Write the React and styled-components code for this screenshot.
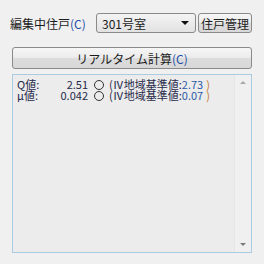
import React from 'react';
import styled, { createGlobalStyle } from 'styled-components';

const GlobalStyle = createGlobalStyle`
  html, body {
    margin: 0;
    padding: 0;
    background: #f0f0f0;
  }
  body {
    font-family: "Noto Sans CJK JP", "Noto Sans", sans-serif;
    color: #1b1b1b;
  }
`;

const Panel = styled.div`
  width: 264px;
  height: 264px;
  box-sizing: border-box;
  padding: 13px 12px 11px 12px;
  display: flex;
  flex-direction: column;
  background: #f0f0f0;
`;

const TopRow = styled.div`
  display: flex;
  align-items: center;
  height: 20px;
`;

const Label = styled.span`
  font-size: 12px;
  margin-left: -2px;
  width: 86px;
  white-space: nowrap;
`;

const Mnemonic = styled.span`
  color: #1c4fa8;
`;

const Select = styled.div`
  width: 100px;
  height: 20px;
  box-sizing: border-box;
  border: 1px solid #8a8a8a;
  border-radius: 3px;
  background: linear-gradient(#f4f4f4, #e2e2e2);
  display: flex;
  align-items: center;
  justify-content: space-between;
  padding: 0 6px 0 5px;
  font-size: 12px;
`;

const Arrow = styled.span`
  width: 0;
  height: 0;
  border-left: 4px solid transparent;
  border-right: 4px solid transparent;
  border-top: 4px solid #111;
`;

const Button = styled.div`
  box-sizing: border-box;
  border: 1px solid #8a8a8a;
  border-radius: 3px;
  background: linear-gradient(#f6f6f6 0%, #ebebeb 50%, #dcdcdc 51%, #d8d8d8 100%);
  display: flex;
  align-items: center;
  justify-content: center;
  font-size: 12px;
  height: ${p => p.$h}px;
  width: ${p => (p.$w ? `${p.$w}px` : 'auto')};
  margin-left: ${p => p.$ml || 0}px;
  margin-top: ${p => p.$mt || 0}px;
`;

const Output = styled.div`
  margin-top: 5px;
  flex: 1;
  box-sizing: border-box;
  border: 1px solid #aacbe0;
  background: #ececec;
  display: flex;
`;

const Lines = styled.div`
  flex: 1;
  padding: 4px 0 0 4px;
  font-size: 11px;
  line-height: 11px;
  color: #262a4a;
`;

const Line = styled.div`
  display: flex;
  align-items: center;
  height: 11px;
  white-space: nowrap;
`;

const Key = styled.span`
  width: 34px;
`;

const Value = styled.span`
  width: 37px;
  text-align: right;
`;

const Mark = styled.span`
  width: 8px;
  height: 8px;
  border: 1px solid #333;
  border-radius: 50%;
  margin: 0 5px 0 6px;
`;

const Num = styled.span`
  color: #2b5aa8;
`;

const Paren = styled.span`
  color: #c07a30;
  margin-left: 3px;
`;

const Scrollbar = styled.div`
  width: 16px;
  background: #f0f0f0;
  border-left: 1px solid #e6e6e6;
  display: flex;
  flex-direction: column;
  justify-content: space-between;
  align-items: center;
  padding: 6px 0;
`;

const ScrollArrow = styled.span`
  width: 0;
  height: 0;
  border-left: 3px solid transparent;
  border-right: 3px solid transparent;
  ${p => (p.$up ? 'border-bottom: 3px solid #a8a8a8;' : 'border-top: 3px solid #7a7a7a;')}
`;

const rows = [
  { key: 'Q値:', value: '2.51', base: '2.73' },
  { key: 'μ値:', value: '0.042', base: '0.07' },
];

export default function App() {
  return (
    <>
      <GlobalStyle />
      <Panel>
        <TopRow>
          <Label>
            編集中住戸<Mnemonic>(C)</Mnemonic>
          </Label>
          <Select>
            <span>301号室</span>
            <Arrow />
          </Select>
          <Button $h={20} $w={54} $ml={2}>住戸管理</Button>
        </TopRow>
        <Button $h={22} $mt={14}>
          リアルタイム計算<Mnemonic>(C)</Mnemonic>
        </Button>
        <Output>
          <Lines>
            {rows.map(r => (
              <Line key={r.key}>
                <Key>{r.key}</Key>
                <Value>{r.value}</Value>
                <Mark />
                <span>(Ⅳ地域基準値:<Num>{r.base}</Num><Paren>)</Paren></span>
              </Line>
            ))}
          </Lines>
          <Scrollbar>
            <ScrollArrow $up />
            <ScrollArrow />
          </Scrollbar>
        </Output>
      </Panel>
    </>
  );
}
